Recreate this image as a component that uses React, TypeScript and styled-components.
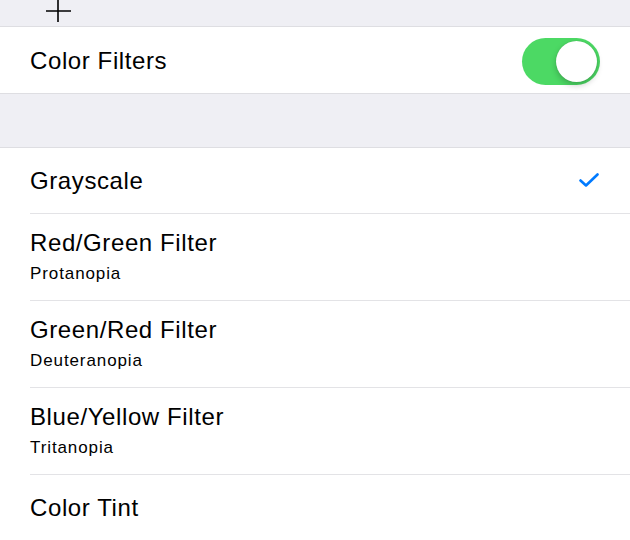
import styled, { createGlobalStyle } from 'styled-components';

const GlobalStyle = createGlobalStyle`
  html, body {
    margin: 0;
    padding: 0;
    background: #ffffff;
  }
  body {
    font-family: "Liberation Sans", Arial, sans-serif;
    color: #000;
    -webkit-font-smoothing: antialiased;
  }
`;

interface Filter {
  title: string;
  subtitle?: string;
  checked?: boolean;
}

const filters: Filter[] = [
  { title: 'Grayscale', checked: true },
  { title: 'Red/Green Filter', subtitle: 'Protanopia' },
  { title: 'Green/Red Filter', subtitle: 'Deuteranopia' },
  { title: 'Blue/Yellow Filter', subtitle: 'Tritanopia' },
  { title: 'Color Tint' },
];

const App = () => {
  return (
    <Page>
      <GlobalStyle />
      <TopStrip>
        <Crosshair width="26" height="24" viewBox="0 0 26 24">
          <path d="M12 0 V22 M0 11 H25" stroke="#000" strokeWidth="1.6" fill="none" />
        </Crosshair>
      </TopStrip>
      <ToggleRow>
        <Title>Color Filters</Title>
        <Switch on>
          <Knob />
        </Switch>
      </ToggleRow>
      <SectionGap />
      <List>
        {filters.map((f, i) => (
          <Row key={f.title}>
            <RowInner last={i === filters.length - 1} tall={!!f.subtitle}>
              <Texts>
                <Title>{f.title}</Title>
                {f.subtitle && <Subtitle>{f.subtitle}</Subtitle>}
              </Texts>
              {f.checked && (
                <svg width="20" height="15" viewBox="0 0 20 15">
                  <path
                    d="M1.5 7.5 L7 12.5 L18.5 1.5"
                    stroke="#007aff"
                    strokeWidth="2.6"
                    fill="none"
                    strokeLinecap="round"
                    strokeLinejoin="round"
                  />
                </svg>
              )}
            </RowInner>
          </Row>
        ))}
      </List>
    </Page>
  );
};

const Page = styled.div`
  width: 630px;
  height: 540px;
  overflow: hidden;
  background: #fff;
`;

const TopStrip = styled.div`
  height: 26px;
  background: #efeff4;
  border-bottom: 1px solid #dedee2;
  padding-left: 46px;
`;

const Crosshair = styled.svg`
  display: block;
`;

const ToggleRow = styled.div`
  height: 67px;
  display: flex;
  align-items: center;
  justify-content: space-between;
  padding: 2px 30px 0;
  box-sizing: border-box;
  background: #fff;
  border-bottom: 1px solid #dedee2;
`;

const Title = styled.div`
  font-size: 24px;
  letter-spacing: 0.6px;
  line-height: 28px;
  color: #000;
`;

const Subtitle = styled.div`
  font-size: 17px;
  letter-spacing: 0.9px;
  line-height: 20px;
  margin-top: 7px;
  color: #000;
`;

const Switch = styled.div<{ on?: boolean }>`
  width: 78px;
  height: 47px;
  border-radius: 24px;
  background: ${({ on }) => (on ? '#4cd964' : '#e5e5ea')};
  display: flex;
  align-items: center;
  justify-content: ${({ on }) => (on ? 'flex-end' : 'flex-start')};
  padding: 0 3px;
  box-sizing: border-box;
`;

const Knob = styled.div`
  width: 41px;
  height: 41px;
  border-radius: 50%;
  background: #fff;
  box-shadow: 0 3px 6px rgba(0, 0, 0, 0.22), 0 0 1px rgba(0, 0, 0, 0.2);
`;

const SectionGap = styled.div`
  height: 53px;
  background: #efeff4;
  border-bottom: 1px solid #dedee2;
`;

const List = styled.div`
  background: #fff;
`;

const Row = styled.div`
  padding-left: 30px;
`;

const RowInner = styled.div<{ last?: boolean; tall?: boolean }>`
  height: ${({ tall }) => (tall ? '84px' : '65px')};
  display: flex;
  align-items: center;
  justify-content: space-between;
  padding-right: 31px;
  padding-bottom: ${({ tall }) => (tall ? '2px' : '0')};
  box-sizing: content-box;
  border-bottom: ${({ last }) => (last ? 'none' : '1px solid #e3e3e6')};
`;

const Texts = styled.div`
  display: flex;
  flex-direction: column;
`;

export default App;
